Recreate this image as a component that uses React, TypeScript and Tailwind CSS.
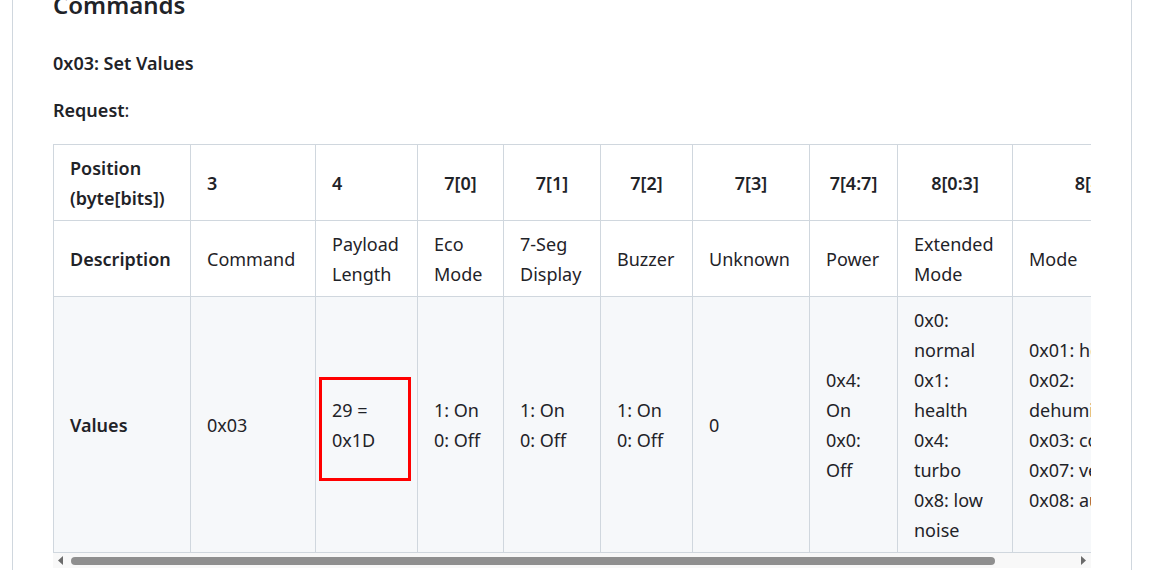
import React from "react"

type Col = {
  pos: string
  desc: string[]
  values: string[]
  center?: boolean
}

const columns: Col[] = [
  { pos: "3", desc: ["Command"], values: ["0x03"] },
  { pos: "4", desc: ["Payload", "Length"], values: ["29 =", "0x1D"] },
  { pos: "7[0]", desc: ["Eco", "Mode"], values: ["1: On", "0: Off"], center: true },
  { pos: "7[1]", desc: ["7-Seg", "Display"], values: ["1: On", "0: Off"], center: true },
  { pos: "7[2]", desc: ["Buzzer"], values: ["1: On", "0: Off"], center: true },
  { pos: "7[3]", desc: ["Unknown"], values: ["0"], center: true },
  { pos: "7[4:7]", desc: ["Power"], values: ["0x4:", "On", "0x0:", "Off"], center: true },
  {
    pos: "8[0:3]",
    desc: ["Extended", "Mode"],
    values: ["0x0:", "normal", "0x1:", "health", "0x4:", "turbo", "0x8: low", "noise"],
    center: true,
  },
  {
    pos: "8[4:7]",
    desc: ["Mode"],
    values: ["0x01: heat", "0x02:", "dehumidify", "0x03: cool", "0x07: ventilate", "0x08: auto"],
    center: true,
  },
]

function Lines({ lines }: { lines: string[] }) {
  return (
    <>
      {lines.map((l, i) => (
        <React.Fragment key={i}>
          {i > 0 && <br />}
          {l}
        </React.Fragment>
      ))}
    </>
  )
}

const cell = "border border-[#d0d7de] px-4 pt-[8px] pb-[7px] align-middle whitespace-nowrap"

export default function App() {
  return (
    <div
      className="min-h-screen bg-white text-[18px] leading-[30px] text-[#1f2328] overflow-hidden"
      style={{ fontFamily: '"Noto Sans", "Open Sans", sans-serif' }}
    >
      <div className="ml-[12px] w-[1120px] -mt-[13px] border-x border-[#d0d7de] px-10 pb-10">
        {/* titulo de seccion */}
        <h2 className="text-[24px] leading-[36px] font-semibold">Commands</h2>
        <p className="mt-[25px] font-semibold">0x03: Set Values</p>
        <p className="mt-[17px]">
          <span className="font-semibold">Request</span>:
        </p>

        {/* tabla con scroll horizontal */}
        <div className="mt-[19px] w-[1038px]">
          <div className="overflow-hidden">
            <table className="table-fixed border-collapse w-[1131px]">
              <colgroup>
                <col className="w-[137px]" />
                <col className="w-[125px]" />
                <col className="w-[102px]" />
                <col className="w-[86px]" />
                <col className="w-[97px]" />
                <col className="w-[92px]" />
                <col className="w-[117px]" />
                <col className="w-[88px]" />
                <col className="w-[115px]" />
                <col className="w-[172px]" />
              </colgroup>
              <tbody>
                <tr className="bg-white">
                  <th className={`${cell} text-left font-semibold`}>
                    Position
                    <br />
                    (byte[bits])
                  </th>
                  {columns.map((c) => (
                    <th
                      key={c.pos}
                      className={`${cell} font-semibold ${c.center ? "text-center" : "text-left"}`}
                    >
                      {c.pos}
                    </th>
                  ))}
                </tr>
                <tr className="bg-white">
                  <th className={`${cell} text-left font-semibold`}>Description</th>
                  {columns.map((c) => (
                    <td key={c.pos} className={`${cell} text-left`}>
                      <Lines lines={c.desc} />
                    </td>
                  ))}
                </tr>
                <tr className="bg-[#f6f8fa]">
                  <th className={`${cell} text-left font-semibold`}>Values</th>
                  {columns.map((c) => (
                    <td key={c.pos} className={`${cell} text-left ${c.pos === "4" ? "relative" : ""}`}>
                      <Lines lines={c.values} />
                      {c.pos === "4" && (
                        <span className="absolute left-[3px] top-[80px] w-[92px] h-[104px] border-[3px] border-[#ff0000]" />
                      )}
                    </td>
                  ))}
                </tr>
              </tbody>
            </table>
          </div>

          {/* barra de scroll */}
          <div className="flex h-[15px] items-center bg-[#f8f8f8]">
            <div className="flex w-[15px] justify-center">
              <svg width="6" height="9" viewBox="0 0 6 9">
                <polygon points="5,0 5,9 0,4.5" fill="#6b6b6b" />
              </svg>
            </div>
            <div className="flex-1 pl-[3px]">
              <div className="h-[8px] w-[924px] rounded-full bg-[#8f8f8f]" />
            </div>
            <div className="flex w-[15px] justify-center">
              <svg width="6" height="9" viewBox="0 0 6 9">
                <polygon points="0,0 0,9 5,4.5" fill="#6b6b6b" />
              </svg>
            </div>
          </div>
        </div>
      </div>
    </div>
  )
}
